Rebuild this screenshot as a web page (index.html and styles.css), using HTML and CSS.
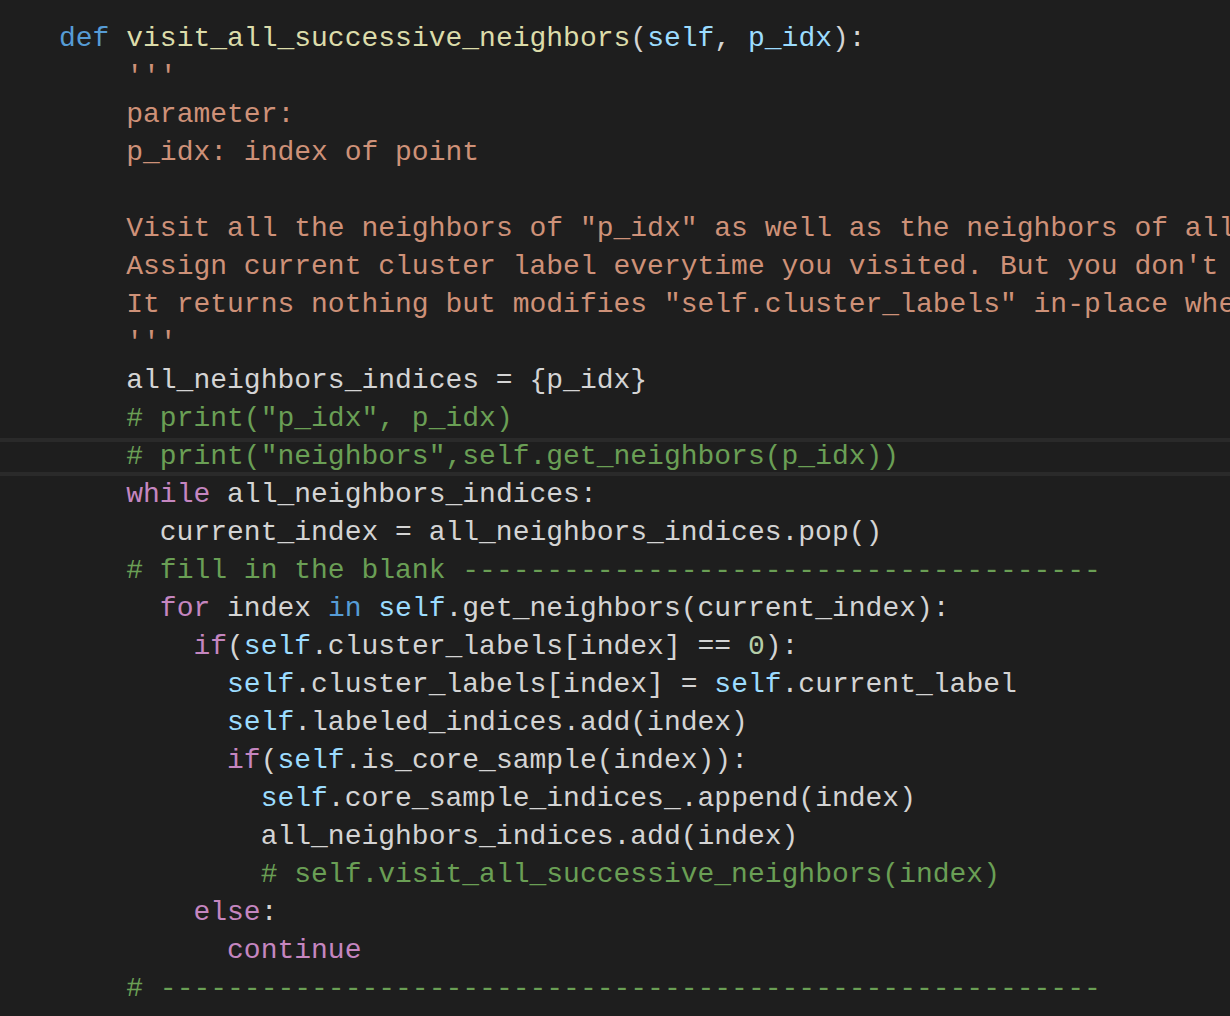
FILE: index.html
```html
<!DOCTYPE html>
<html>
<head>
<meta charset="utf-8">
<link rel="stylesheet" href="styles.css">
</head>
<body>
<pre class="code"><div class="ln"><span class="kw">def</span> <span class="fn">visit_all_successive_neighbors</span>(<span class="var">self</span>, <span class="var">p_idx</span>):</div><div class="ln">    <span class="str">'''</span></div><div class="ln">    <span class="str">parameter:</span></div><div class="ln">    <span class="str">p_idx: index of point</span></div><div class="ln"> </div><div class="ln">    <span class="str">Visit all the neighbors of "p_idx" as well as the neighbors of all</span></div><div class="ln">    <span class="str">Assign current cluster label everytime you visited. But you don't</span></div><div class="ln">    <span class="str">It returns nothing but modifies "self.cluster_labels" in-place whe</span></div><div class="ln">    <span class="str">'''</span></div><div class="ln">    all_neighbors_indices = {p_idx}</div><div class="ln">    <span class="cm"># print("p_idx", p_idx)</span></div><div class="ln cur">    <span class="cm"># print("neighbors",self.get_neighbors(p_idx))</span></div><div class="ln">    <span class="ctl">while</span> all_neighbors_indices:</div><div class="ln">      current_index = all_neighbors_indices.pop()</div><div class="ln">    <span class="cm"># fill in the blank --------------------------------------</span></div><div class="ln">      <span class="ctl">for</span> index <span class="kw">in</span> <span class="var">self</span>.get_neighbors(current_index):</div><div class="ln">        <span class="ctl">if</span>(<span class="var">self</span>.cluster_labels[index] == <span class="num">0</span>):</div><div class="ln">          <span class="var">self</span>.cluster_labels[index] = <span class="var">self</span>.current_label</div><div class="ln">          <span class="var">self</span>.labeled_indices.add(index)</div><div class="ln">          <span class="ctl">if</span>(<span class="var">self</span>.is_core_sample(index)):</div><div class="ln">            <span class="var">self</span>.core_sample_indices_.append(index)</div><div class="ln">            all_neighbors_indices.add(index)</div><div class="ln">            <span class="cm"># self.visit_all_successive_neighbors(index)</span></div><div class="ln">        <span class="ctl">else</span>:</div><div class="ln">          <span class="ctl">continue</span></div><div class="ln">    <span class="cm"># --------------------------------------------------------</span></div></pre>
</body>
</html>
```
FILE: styles.css
```css
html, body {
  margin: 0;
  padding: 0;
  background: #1e1e1e;
  overflow: hidden;
  height: 100%;
}
.code {
  margin: 0;
  padding: 20px 0 0 0;
  font-family: "Courier New", "Nimbus Mono PS", "FreeMono", "Liberation Mono", monospace;
  font-size: 28px;
  line-height: 38px;
  color: #d4d4d4;
  white-space: pre;
}
.ln {
  height: 38px;
  padding-left: 59px;
  box-sizing: border-box;
}
.ln.cur {
  border-top: 4px solid #2a2a2a;
  border-bottom: 4px solid #2a2a2a;
  line-height: 30px;
}
.kw { color: #569cd6; }
.fn { color: #dcdcaa; }
.var { color: #9cdcfe; }
.str { color: #ce9178; }
.cm { color: #6a9f55; }
.ctl { color: #c586c0; }
.num { color: #b5cea8; }
```
